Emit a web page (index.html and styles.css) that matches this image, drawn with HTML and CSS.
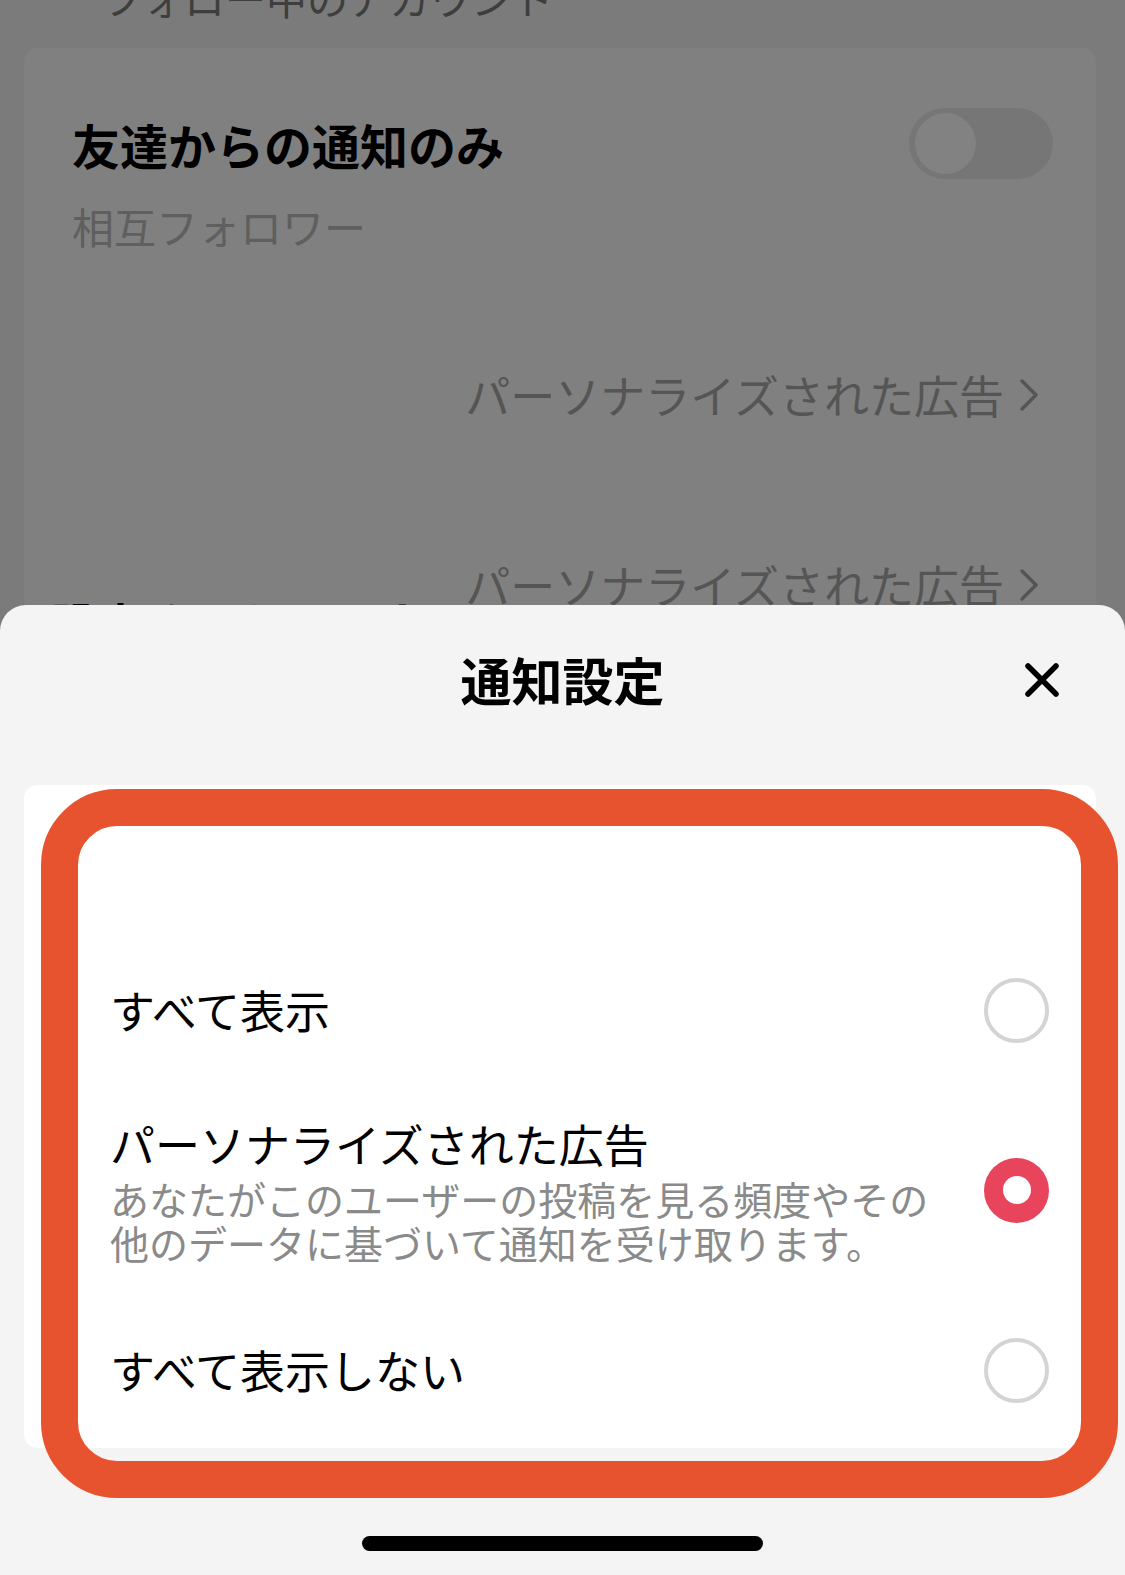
FILE: index.html
```html
<!DOCTYPE html>
<html lang="ja">
<head>
    <meta charset="UTF-8">
    <meta name="viewport" content="width=device-width, initial-scale=1.0">
    <title>通知設定</title>
    <link rel="stylesheet" href="styles.css">
</head>
<body>
    <!-- Dimmed settings page behind the sheet -->
    <div class="backdrop">
        <div class="bg-heading">フォロー中のアカウント</div>
        <div class="bg-card">
            <div class="bg-row">
                <span class="bg-title">友達からの通知のみ</span>
                <span class="toggle"><span class="knob"></span></span>
            </div>
            <div class="bg-sub">相互フォロワー</div>
            <div class="bg-link first">パーソナライズされた広告<span class="chev">
                <svg width="22" height="34" viewBox="0 0 22 34"><path d="M4 3 L18 17 L4 31" fill="none" stroke="#555" stroke-width="3.5" stroke-linecap="round" stroke-linejoin="round"/></svg>
            </span></div>
            <div class="bg-link second">パーソナライズされた広告<span class="chev">
                <svg width="22" height="34" viewBox="0 0 22 34"><path d="M4 3 L18 17 L4 31" fill="none" stroke="#555" stroke-width="3.5" stroke-linecap="round" stroke-linejoin="round"/></svg>
            </span></div>
            <div class="bg-peek">設定されたアカウント</div>
        </div>
    </div>

    <!-- Bottom sheet -->
    <div class="sheet">
        <div class="sheet-header">
            <span></span>
            <h1>通知設定</h1>
            <button class="close" aria-label="閉じる">
                <svg width="34" height="34" viewBox="0 0 34 34"><path d="M3 3 L31 31 M31 3 L3 31" stroke="#000" stroke-width="5.5" stroke-linecap="round"/></svg>
            </button>
        </div>

        <div class="options">
            <div class="option">
                <div class="option-text">
                    <div class="option-title">すべて表示</div>
                </div>
                <span class="radio"></span>
            </div>
            <div class="option">
                <div class="option-text">
                    <div class="option-title">パーソナライズされた広告</div>
                    <div class="option-desc">あなたがこのユーザーの投稿を見る頻度やその他のデータに基づいて通知を受け取ります。</div>
                </div>
                <span class="radio checked"></span>
            </div>
            <div class="option last">
                <div class="option-text">
                    <div class="option-title">すべて表示しない</div>
                </div>
                <span class="radio"></span>
            </div>
        </div>

        <div class="home-bar"></div>

        <!-- highlight annotation drawn over the options -->
        <div class="highlight"></div>
    </div>
</body>
</html>
```

FILE: styles.css
```css
* {
    box-sizing: border-box;
}

body {
    margin: 0;
    height: 1575px;
    overflow: hidden;
    position: relative;
    background-color: #7b7b7b;
    font-family: "Noto Sans CJK JP", "Noto Sans", sans-serif;
    color: #000;
}

/* Page behind the sheet, already dimmed */
.backdrop {
    padding-top: 1px;
}

.bg-heading {
    margin-top: -28px;
    padding-left: 102px;
    font-size: 41px;
    line-height: 48px;
    color: #3e3e3e;
}

.bg-card {
    margin: 27px 29px 0 24px;
    padding: 60px 43px 0 48px;
    background-color: #808080;
    border-radius: 14px;
    height: 700px;
}

.bg-row {
    display: flex;
    justify-content: space-between;
    align-items: center;
    height: 71px;
}

.bg-title {
    font-size: 48px;
    font-weight: 700;
    line-height: 60px;
}

.toggle {
    width: 144px;
    height: 71px;
    border-radius: 36px;
    background-color: #767676;
    padding: 5px 6px;
    display: flex;
}

.knob {
    width: 61px;
    height: 61px;
    border-radius: 50%;
    background-color: #828282;
}

.bg-sub {
    margin-top: 22px;
    font-size: 42px;
    line-height: 50px;
    color: #5f5f5f;
}

.bg-link {
    display: flex;
    justify-content: flex-end;
    align-items: center;
    padding-right: 13px;
    font-size: 45px;
    line-height: 56px;
    color: #555;
}

.bg-link.first {
    margin-top: 116px;
}

.bg-link.second {
    margin-top: 134px;
}

.chev {
    display: flex;
    margin-left: 14px;
}

.bg-peek {
    margin-top: -18px;
    margin-left: -22px;
    font-size: 47px;
    font-weight: 700;
    line-height: 56px;
}

/* Bottom sheet */
.sheet {
    position: absolute;
    top: 605px;
    left: 0;
    right: 0;
    bottom: 0;
    background-color: #f4f4f4;
    border-radius: 26px 26px 0 0;
}

.sheet-header {
    height: 150px;
    display: grid;
    grid-template-columns: 1fr auto 1fr;
    align-items: center;
}

.sheet-header h1 {
    margin: 0 0 2px;
    font-size: 51px;
    font-weight: 700;
    line-height: 60px;
}

.close {
    justify-self: end;
    margin-right: 66px;
    padding: 0;
    border: none;
    background: none;
    display: flex;
}

.options {
    margin: 30px 29px 0 24px;
    padding: 135px 47px 0 86px;
    background-color: #fff;
    border-radius: 14px;
}

.option {
    height: 180px;
    display: flex;
    justify-content: space-between;
    align-items: center;
}

.option.last {
    height: 168px;
    padding-top: 12px;
}

.option-title {
    font-size: 45px;
    line-height: 54px;
}

.option-desc {
    max-width: 840px;
    margin-top: 5px;
    font-size: 39px;
    line-height: 44px;
    color: #8a8a8a;
}

.radio {
    flex-shrink: 0;
    width: 65px;
    height: 65px;
    border-radius: 50%;
    border: 4px solid #d4d4d4;
    background-color: #fff;
    display: flex;
    align-items: center;
    justify-content: center;
}

.radio.checked {
    border: none;
    background-color: #e8445c;
}

.radio.checked::after {
    content: "";
    width: 28px;
    height: 28px;
    border-radius: 50%;
    background-color: #fff;
}

.home-bar {
    width: 401px;
    height: 15px;
    margin: 88px auto 0;
    background-color: #000;
    border-radius: 8px;
}

.highlight {
    position: absolute;
    top: 184px;
    left: 41px;
    width: 1077px;
    height: 709px;
    border: 37px solid #e8532f;
    border-radius: 76px;
    pointer-events: none;
}
```
